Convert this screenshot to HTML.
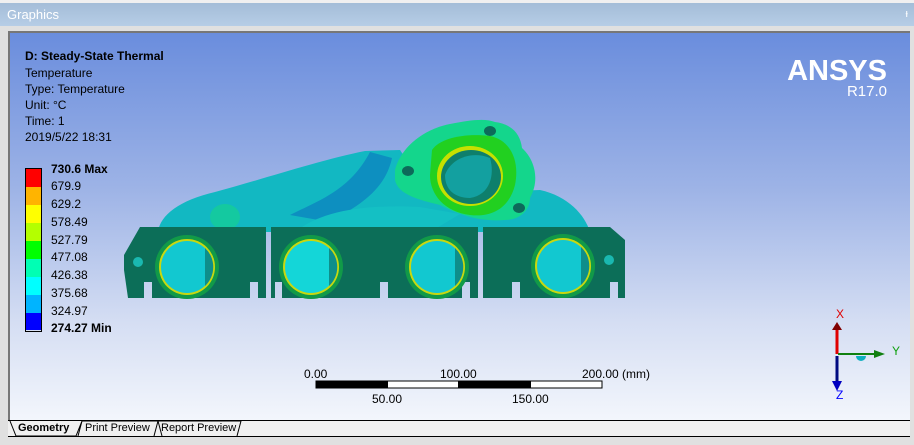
<!DOCTYPE html>
<html><head><meta charset="utf-8"><style>
html,body{margin:0;padding:0;}
body{width:914px;height:445px;position:relative;background:#f0f0f0;font-family:"Liberation Sans",Tahoma,sans-serif;overflow:hidden;}
.title{position:absolute;left:0;top:3px;width:914px;height:23px;background:linear-gradient(#a4bdd8,#b6cde6);color:#fff;font-size:13px;line-height:23px;padding-left:7px;box-sizing:border-box;}
.pin{position:absolute;right:6px;top:0;color:#fff;font-size:11px;}
.frame{position:absolute;left:0;top:26px;width:914px;height:419px;background:#e0e0e0;}
.vp{position:absolute;left:8px;top:31px;width:902px;height:389px;background:linear-gradient(#6a8ddd 0%,#9db3e6 40%,#d5def3 75%,#f3f6fc 100%);border-top:2px solid #777;border-left:2px solid #777;box-sizing:border-box;}
.t{position:absolute;color:#000;font-size:12px;line-height:16px;white-space:nowrap;}
.b{font-weight:bold;}
.leg{position:absolute;left:25px;top:168px;width:15px;height:162px;border:1px solid #000;}
.leg div{height:18px;}
.ansys{position:absolute;right:27px;top:55px;color:#fff;font-size:29px;font-weight:bold;letter-spacing:0;}
.r17{position:absolute;right:27px;top:83px;color:#fff;font-size:15px;}
.tabs{position:absolute;left:8px;top:420px;width:902px;height:17px;background:#f0f0f0;border-top:1px solid #000;border-bottom:1px solid #000;box-sizing:border-box;font-size:11px;}
</style></head><body>
<div class="title">Graphics<span class="pin">ᵻ</span></div>
<div class="frame"></div>
<div class="vp"></div>
<div class="t b" style="left:25px;top:48px;">D: Steady-State Thermal</div>
<div class="t" style="left:25px;top:65px;">Temperature</div>
<div class="t" style="left:25px;top:81px;">Type: Temperature</div>
<div class="t" style="left:25px;top:97px;">Unit: °C</div>
<div class="t" style="left:25px;top:113px;">Time: 1</div>
<div class="t" style="left:25px;top:129px;">2019/5/22 18:31</div>
<div class="leg">
<div style="background:#ff0000"></div><div style="background:#ffb400"></div><div style="background:#ffff00"></div><div style="background:#b4ff00"></div><div style="background:#00ff00"></div><div style="background:#00ffb4"></div><div style="background:#00ffff"></div><div style="background:#00b4ff"></div><div style="background:#0000ff;height:17px"></div>
</div>
<div class="t b" style="left:51px;top:161px;">730.6 Max</div>
<div class="t" style="left:51px;top:178px;">679.9</div>
<div class="t" style="left:51px;top:196px;">629.2</div>
<div class="t" style="left:51px;top:214px;">578.49</div>
<div class="t" style="left:51px;top:232px;">527.79</div>
<div class="t" style="left:51px;top:249px;">477.08</div>
<div class="t" style="left:51px;top:267px;">426.38</div>
<div class="t" style="left:51px;top:285px;">375.68</div>
<div class="t" style="left:51px;top:303px;">324.97</div>
<div class="t b" style="left:51px;top:320px;">274.27 Min</div>
<div class="ansys">ANSYS</div>
<div class="r17">R17.0</div>

<svg style="position:absolute;left:0;top:0" width="914" height="445">
<!-- rear pipes -->
<path d="M158 232 C160 215 180 200 215 192 C260 180 320 160 365 151 L400 150 L420 180 L480 192 L540 190 C568 196 585 215 590 232 Z" fill="#12b8c2"/>
<path d="M290 215 C320 200 350 190 370 152 L392 158 C385 190 360 205 330 222 Z" fill="#0d8fc0"/>
<path d="M295 232 C320 212 360 204 420 207 L460 214 L430 232 Z" fill="#14c0c4"/>
<ellipse cx="225" cy="217" rx="15" ry="13" fill="#14c9a0"/>
<!-- turbo flange -->
<path d="M395 170 C400 150 420 130 450 124 C470 120 485 118 495 122 C510 124 520 132 522 148 C535 160 540 180 530 198 C530 210 520 220 505 220 C480 222 460 215 440 205 C420 200 398 195 395 180 Z" fill="#14d68c"/>
<path d="M432 150 C440 138 465 133 490 136 C510 140 520 160 515 185 C510 205 495 218 470 215 C445 212 430 195 430 175 Z" fill="#22d020"/>
<ellipse cx="470" cy="176" rx="33" ry="30" fill="#c6e000"/>
<ellipse cx="471" cy="177" rx="30" ry="27" fill="#0e7f6c"/>
<path d="M445 175 C450 160 470 150 490 158 C495 175 490 195 470 198 C455 198 445 190 445 175Z" fill="#13a0a0"/>
<ellipse cx="490" cy="131" rx="6" ry="5" fill="#0d6a5a"/>
<ellipse cx="408" cy="171" rx="6" ry="5" fill="#0d6a5a"/>
<ellipse cx="519" cy="208" rx="6" ry="5" fill="#0d6a5a"/>
<!-- plates -->
<g fill="#0c6e58">
<path d="M140 227 L266 227 L266 298 L258 298 L258 282 L250 282 L250 298 L152 298 L152 282 L144 282 L144 298 L128 298 L124 270 L124 255 Z"/>
<path d="M271 227 L478 227 L478 298 L470 298 L470 282 L462 282 L462 298 L388 298 L388 282 L380 282 L380 298 L282 298 L282 282 L275 282 L275 298 L271 298 Z"/>
<path d="M483 227 L610 227 L625 240 L625 298 L618 298 L618 282 L610 282 L610 298 L520 298 L520 282 L512 282 L512 298 L483 298 Z"/>
</g>
<g>
<circle cx="187" cy="267" r="32" fill="#119a48"/><circle cx="187" cy="267" r="28" fill="#c8d810"/><circle cx="187" cy="267" r="26" fill="#12c8d0"/><path d="M205 248 A26 26 0 0 1 205 286 Z" fill="#0e8e8a"/>
<circle cx="311" cy="267" r="32" fill="#119a48"/><circle cx="311" cy="267" r="28" fill="#c8d810"/><circle cx="311" cy="267" r="26" fill="#14d6d8"/><path d="M329 248 A26 26 0 0 1 329 286 Z" fill="#0e8e8a"/>
<circle cx="437" cy="267" r="32" fill="#119a48"/><circle cx="437" cy="267" r="28" fill="#c8d810"/><circle cx="437" cy="267" r="26" fill="#12c8d0"/><path d="M455 248 A26 26 0 0 1 455 286 Z" fill="#0e8e8a"/>
<circle cx="563" cy="266" r="32" fill="#119a48"/><circle cx="563" cy="266" r="28" fill="#c8d810"/><circle cx="563" cy="266" r="26" fill="#12c8d0"/><path d="M581 247 A26 26 0 0 1 581 285 Z" fill="#0e8e8a"/>
</g>
<ellipse cx="138" cy="262" rx="5" ry="5" fill="#1ab8b0"/>
<ellipse cx="609" cy="260" rx="5" ry="5" fill="#1ab8b0"/>
<!-- scale -->
<rect x="316" y="381" width="286" height="7" fill="#fff" stroke="#000" stroke-width="1"/>
<rect x="316" y="381" width="72" height="7" fill="#000"/>
<rect x="458" y="381" width="73" height="7" fill="#000"/>
<!-- triad -->
<line x1="837" y1="354" x2="837" y2="326" stroke="#e00000" stroke-width="3"/>
<path d="M832 330 L837 322 L842 330 Z" fill="#800000"/>
<line x1="837" y1="356" x2="837" y2="384" stroke="#000a80" stroke-width="3"/>
<path d="M832 381 L837 391 L842 381 Z" fill="#0000c0"/>
<line x1="838" y1="354" x2="876" y2="354" stroke="#108010" stroke-width="2"/>
<path d="M874 350 L885 354 L874 358 Z" fill="#108010"/>
<path d="M856 356 A5 5 0 0 0 866 356 Z" fill="#10b0c0"/>
<text x="836" y="318" fill="#e00000" font-size="12" font-family="Liberation Sans">X</text>
<text x="892" y="355" fill="#10a010" font-size="12" font-family="Liberation Sans">Y</text>
<text x="836" y="399" fill="#0000ff" font-size="12" font-family="Liberation Sans">Z</text>
</svg>
<div class="t" style="left:304px;top:366px;">0.00</div>
<div class="t" style="left:440px;top:366px;">100.00</div>
<div class="t" style="left:582px;top:366px;">200.00 (mm)</div>
<div class="t" style="left:372px;top:391px;">50.00</div>
<div class="t" style="left:512px;top:391px;">150.00</div>
<div class="tabs">
<svg style="position:absolute;left:0;top:0" width="300" height="16"><path d="M2 0 L8 15 L68 15 L74 0 M74 0 L70 15 M74 0 L150 0 L154 15 M150 0 L146 15 L150 0 L233 0 L229 15" fill="none" stroke="#000" stroke-width="1"/></svg>
<span style="position:absolute;left:10px;top:1px;font-weight:bold;">Geometry</span>
<span style="position:absolute;left:77px;top:1px;">Print Preview</span>
<span style="position:absolute;left:153px;top:1px;">Report Preview</span>
</div>
</body></html>
